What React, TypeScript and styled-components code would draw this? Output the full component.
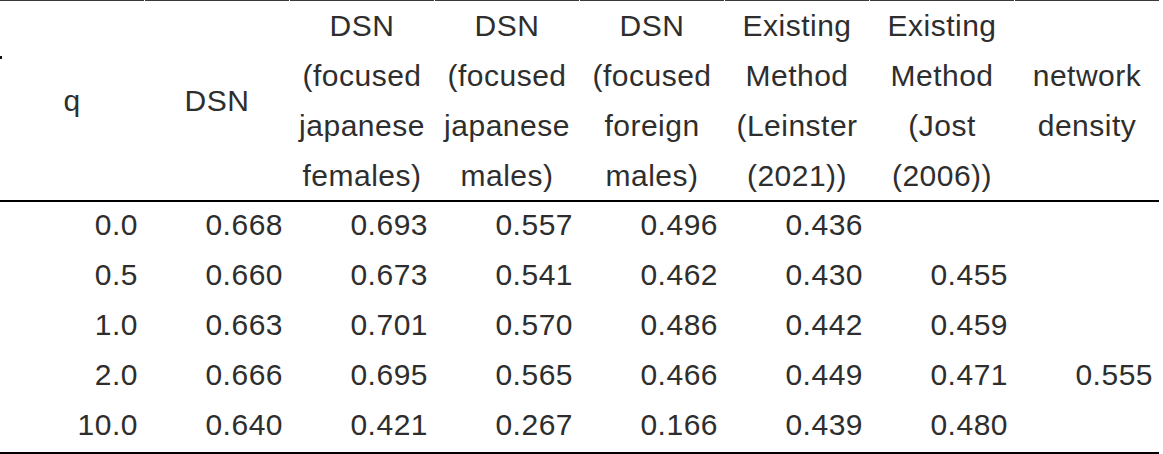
import React from "react";
import styled, { createGlobalStyle } from "styled-components";

const GlobalStyle = createGlobalStyle`
  html, body {
    margin: 0;
    padding: 0;
    background: #ffffff;
  }
`;

const headers: string[][] = [
  ["q"],
  ["DSN"],
  ["DSN", "(focused", "japanese", "females)"],
  ["DSN", "(focused", "japanese", "males)"],
  ["DSN", "(focused", "foreign", "males)"],
  ["Existing", "Method", "(Leinster", "(2021))"],
  ["Existing", "Method", "(Jost", "(2006))"],
  ["network", "density"],
];

const rows: string[][] = [
  ["0.0", "0.668", "0.693", "0.557", "0.496", "0.436", "", ""],
  ["0.5", "0.660", "0.673", "0.541", "0.462", "0.430", "0.455", ""],
  ["1.0", "0.663", "0.701", "0.570", "0.486", "0.442", "0.459", ""],
  ["2.0", "0.666", "0.695", "0.565", "0.466", "0.449", "0.471", "0.555"],
  ["10.0", "0.640", "0.421", "0.267", "0.166", "0.439", "0.480", ""],
];

const App = () => {
  return (
    <>
      <GlobalStyle />
      <Table>
        <HeadRow>
          {headers.map((lines, i) => (
            <HeadCell key={i} $marked={i === 0} $top={lines.length === 4}>
              {lines.map((line, j) => (
                <HeadLine key={j}>{line}</HeadLine>
              ))}
            </HeadCell>
          ))}
        </HeadRow>
        <Body>
          {rows.map((row, r) => (
            <BodyRow key={r}>
              {row.map((value, c) => (
                <Cell key={c}>{value}</Cell>
              ))}
            </BodyRow>
          ))}
        </Body>
      </Table>
    </>
  );
};

export default App;

const Table = styled.div`
  width: 1159px;
  font-family: "Liberation Sans", Arial, sans-serif;
  font-size: 30px;
  letter-spacing: 0.5px;
  color: #2e2e2e;
`;

const HeadRow = styled.div`
  display: grid;
  grid-template-columns: repeat(8, 144px);
  column-gap: 1px;
`;

const HeadCell = styled.div<{ $marked?: boolean; $top?: boolean }>`
  position: relative;
  height: 199px;
  border-top: 1px solid #3a3a3a;
  display: flex;
  flex-direction: column;
  justify-content: ${(p) => (p.$top ? "flex-start" : "center")};
  align-items: center;

  ${(p) =>
    p.$marked &&
    `
    &::before {
      content: "";
      position: absolute;
      left: 0;
      top: 55px;
      width: 2px;
      height: 3px;
      background: #111111;
    }
  `}
`;

const HeadLine = styled.div`
  line-height: 50px;
  white-space: nowrap;
  text-align: center;
`;

const Body = styled.div`
  border-top: 2px solid #000000;
  border-bottom: 2px solid #000000;
`;

const BodyRow = styled.div`
  display: grid;
  grid-template-columns: repeat(8, 144px);
  column-gap: 1px;
  height: 50px;
`;

const Cell = styled.div`
  line-height: 46px;
  text-align: right;
  padding-right: 6px;
  white-space: nowrap;
`;
